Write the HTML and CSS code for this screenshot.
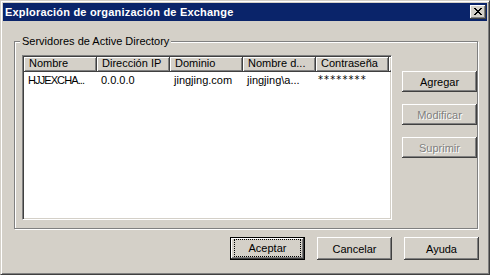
FILE: index.html
```html
<!DOCTYPE html>
<html lang="es">
<head>
<meta charset="utf-8">
<title>Exploración de organización de Exchange</title>
<link rel="stylesheet" href="styles.css">
</head>
<body>
<div class="window">
  <div class="titlebar">
    <span class="title">Exploración de organización de Exchange</span>
    <button class="close" aria-label="Cerrar">
      <svg width="8" height="7" viewBox="0 0 8 7" shape-rendering="crispEdges"><path fill="#000" d="M0 0h2v1h-2z M6 0h2v1h-2z M1 1h2v1h-2z M5 1h2v1h-2z M2 2h4v1h-4z M3 3h2v1h-2z M2 4h4v1h-4z M1 5h2v1h-2z M5 5h2v1h-2z M0 6h2v1h-2z M6 6h2v1h-2z"/></svg>
    </button>
  </div>
  <div class="client">
    <fieldset class="group">
      <legend class="group-label">Servidores de Active Directory</legend>
      <div class="group-body">
        <div class="listview">
          <div class="lv-header">
            <div class="lv-col">Nombre</div>
            <div class="lv-col">Dirección IP</div>
            <div class="lv-col">Dominio</div>
            <div class="lv-col">Nombre d...</div>
            <div class="lv-col">Contraseña</div>
            <div class="lv-col lv-filler"></div>
          </div>
          <div class="lv-row">
            <div class="lv-cell lv-caps">HJJEXCHA...</div>
            <div class="lv-cell">0.0.0.0</div>
            <div class="lv-cell">jingjing.com</div>
            <div class="lv-cell">jingjing\a...</div>
            <div class="lv-cell lv-secret">********</div>
          </div>
        </div>
        <div class="side-buttons">
          <button class="btn btn-side">Agregar</button>
          <button class="btn btn-side" disabled>Modificar</button>
          <button class="btn btn-side" disabled>Suprimir</button>
        </div>
      </div>
    </fieldset>
    <div class="footer">
      <button class="btn btn-default"><span class="focus-rect">Aceptar</span></button>
      <button class="btn">Cancelar</button>
      <button class="btn">Ayuda</button>
    </div>
  </div>
</div>
</body>
</html>
```
FILE: styles.css
```css
html, body {
  margin: 0;
  padding: 0;
  background: #D4D0C8;
}

body {
  font-family: "Liberation Sans", Arial, sans-serif;
  font-size: 11px;
  color: #000;
}

.window {
  width: 490px;
  height: 275px;
  box-sizing: border-box;
  background: #D4D0C8;
  border: 1px solid;
  border-color: #D4D0C8 #404040 #404040 #D4D0C8;
  box-shadow: inset 1px 1px 0 #FFFFFF, inset -1px -1px 0 #808080;
  padding: 2px;
  display: flex;
  flex-direction: column;
}

.titlebar {
  height: 18px;
  flex: none;
  background: #0A246A;
  display: flex;
  align-items: center;
  justify-content: space-between;
  padding: 0 1px 0 2px;
}

.title {
  color: #FFFFFF;
  font-weight: bold;
  font-size: 11px;
  letter-spacing: 0.2px;
  line-height: 13px;
  padding-top: 1px;
  white-space: nowrap;
}

.close {
  width: 16px;
  height: 14px;
  padding: 0 1px 1px 0;
  margin: 0;
  border: none;
  background: #D4D0C8;
  box-shadow: inset -1px -1px 0 #404040, inset 1px 1px 0 #FFFFFF, inset -2px -2px 0 #808080;
  display: flex;
  align-items: center;
  justify-content: center;
}

.close svg {
  display: block;
}

.client {
  flex: 1;
  display: flex;
  flex-direction: column;
  padding: 14px 8px 0 11px;
}

.group {
  margin: 0 1px 0 0;
  padding: 0;
  border: 1px solid #808080;
  box-shadow: 1px 1px 0 #FFFFFF, inset 1px 1px 0 #FFFFFF;
  min-width: 0;
}

.group-label {
  margin-left: 5px;
  padding: 0 2px;
  line-height: 13px;
  background: #D4D0C8;
}

.group-body {
  display: flex;
  align-items: flex-start;
  gap: 10px;
  padding: 7px 0 8px 7px;
}

.listview {
  width: 370px;
  height: 165px;
  box-sizing: border-box;
  flex: none;
  background: #FFFFFF;
  border: 1px solid;
  border-color: #808080 #FFFFFF #FFFFFF #808080;
  box-shadow: inset 1px 1px 0 #404040, inset -1px -1px 0 #D4D0C8;
  padding: 1px;
  overflow: hidden;
}

.lv-header {
  display: flex;
  height: 15px;
}

.lv-col {
  width: 73px;
  flex: none;
  box-sizing: border-box;
  height: 15px;
  line-height: 13px;
  padding-left: 5px;
  background: #D4D0C8;
  border-right: 1px solid #404040;
  border-bottom: 1px solid #404040;
  box-shadow: inset 1px 1px 0 #FFFFFF, inset -1px -1px 0 #808080;
  white-space: nowrap;
  overflow: hidden;
}

.lv-filler {
  flex: 1;
  width: auto;
  border-right: none;
}

.lv-row {
  display: flex;
  height: 14px;
  line-height: 14px;
  margin-top: 1px;
}

.lv-cell {
  width: 73px;
  flex: none;
  box-sizing: border-box;
  padding-left: 4px;
  white-space: nowrap;
  overflow: hidden;
}

.lv-caps {
  letter-spacing: -0.9px;
}

.lv-secret {
  font-family: "DejaVu Sans", sans-serif;
  font-size: 10px;
  letter-spacing: 1.1px;
  padding-left: 2px;
}

.side-buttons {
  display: flex;
  flex-direction: column;
  gap: 12px;
  padding-top: 16px;
}

.btn {
  width: 75px;
  height: 23px;
  box-sizing: border-box;
  margin: 0;
  padding: 0;
  border: none;
  background: #D4D0C8;
  font-family: inherit;
  font-size: 11px;
  color: #000;
  box-shadow: inset -1px -1px 0 #404040, inset 1px 1px 0 #FFFFFF, inset -2px -2px 0 #808080;
  display: flex;
  align-items: center;
  justify-content: center;
}

.btn-side {
  height: 21px;
}

.btn:disabled {
  color: #808080;
  text-shadow: 1px 1px 0 #FFFFFF;
}

.btn-default {
  border: 1px solid #000;
  padding: 1px 3px 2px 3px;
  align-items: stretch;
}

.focus-rect {
  flex: 1;
  border: 1px dotted #000;
  display: flex;
  align-items: center;
  justify-content: center;
}

.footer {
  display: flex;
  justify-content: flex-end;
  gap: 12px;
  margin-top: 8px;
}
```
